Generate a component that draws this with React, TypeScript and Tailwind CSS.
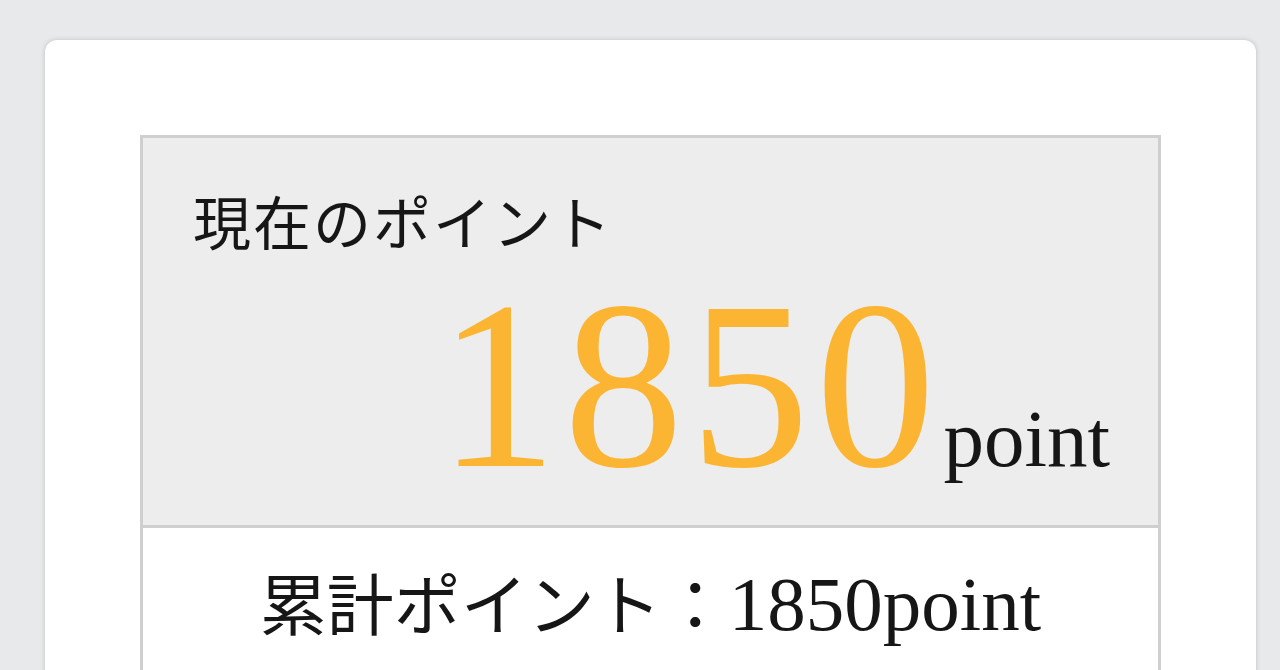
export default function App() {
  const serif = { fontFamily: '"Liberation Serif", "Noto Sans CJK JP", serif' };
  return (
    <div className="h-[670px] w-[1280px] overflow-hidden bg-[#e8e9eb] pl-[45px] pr-[24px] pt-[40px]" style={serif}>
      <div className="h-[700px] w-[1211px] rounded-[12px] bg-white px-[95px] pt-[95px] shadow-[0_0_5px_rgba(0,0,0,0.18)]">
        <div className="border-[3px] border-[#cfcfcf]">
          {/* current balance */}
          <div className="h-[387px] bg-[#ededed] pl-[50px] pr-[48px] pt-[59px]">
            <div className="text-[58px] leading-none tracking-[2px] text-[#161616]">現在のポイント</div>
            <div className="mt-[10px] flex items-baseline justify-end">
              <span className="text-[240px] leading-none tracking-[6px] text-[#fbb533]">1850</span>
              <span className="ml-[2px] text-[81px] leading-none text-[#161616]">point</span>
            </div>
          </div>
          {/* running total */}
          <div className="h-[200px] border-t-[3px] border-[#cfcfcf] bg-white pt-[38px] text-center leading-none text-[#161616]">
            <span className="text-[67px]">累計ポイント：</span>
            <span className="text-[77px]">1850point</span>
          </div>
        </div>
      </div>
    </div>
  );
}
